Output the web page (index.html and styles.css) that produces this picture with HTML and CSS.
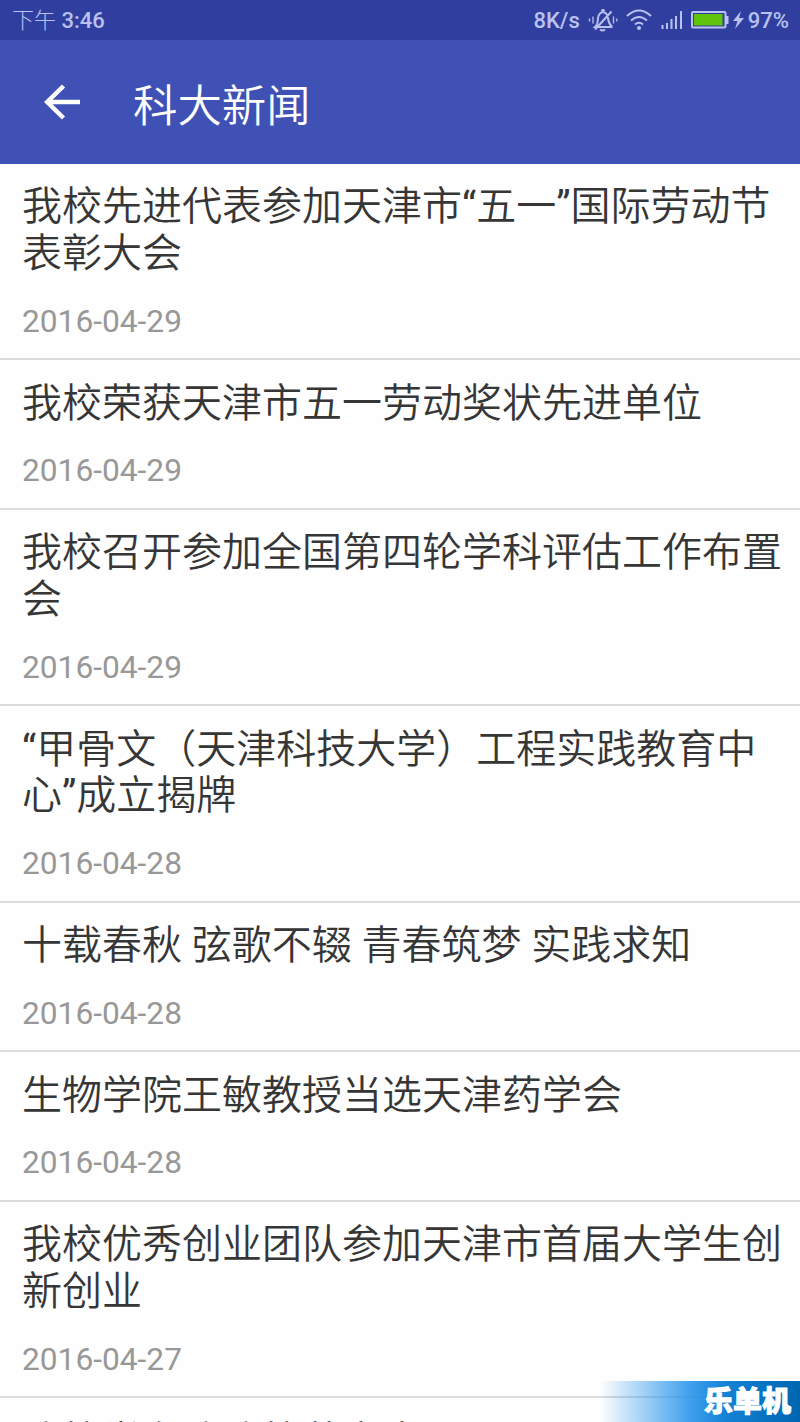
FILE: index.html
```
<!DOCTYPE html>
<html lang="zh-CN">
<head>
    <meta charset="UTF-8">
    <meta name="viewport" content="width=device-width, initial-scale=1.0">
    <title>科大新闻</title>
    <link rel="stylesheet" href="styles.css">
</head>
<body>
    <!-- 状态栏 -->
    <div class="status-bar">
        <div class="time">下午 <b>3:46</b></div>
        <div class="status-icons">
            <span class="speed">8K/s</span>
            <svg class="bell" width="30" height="26" viewBox="0 0 30 26">
                <path d="M8 19c2-2 1.500-4 2-8 .5-3.500 2-5.500 5-6 3 .5 4.500 2.500 5 6 .500 4 1 6 3.500 8v1H7zM13.500 4q1.500-2 3 0M12 22.500q2.500 2 5 0M7 22.500L23.500 4.500"/>
                <path class="waves" d="M5 9.500v7M1.500 11.500v3M25.500 9.500v7M28.800 11.500v3"/>
            </svg>
            <svg class="wifi" width="26" height="22" viewBox="0 0 26 22">
                <path d="M1 7Q13-4 25 7M5 11.500q8-7 16 0M9 15.500q4-3.500 8 0"/>
                <circle cx="13" cy="19" r="2"/>
            </svg>
            <svg class="signal" width="22" height="18" viewBox="0 0 22 18">
                <path d="M1.500 18v-4M6 18v-6M10.500 18V8M15 18V5M20 18V0"/>
            </svg>
            <svg class="battery" width="38" height="18" viewBox="0 0 38 18">
                <rect class="case" x="1" y="1" width="33.500" height="15.500" rx="1"/>
                <rect class="level" x="3" y="3" width="28.500" height="11.500"/>
                <path class="cap" d="M35 5h2.500v8H35z"/>
            </svg>
            <svg class="bolt" width="11" height="18" viewBox="0 0 11 18">
                <path d="M8 0L0 10h4.500L2 18l9-11H6z"/>
            </svg>
            <span class="percent">97%</span>
        </div>
    </div>

    <!-- 标题栏 -->
    <div class="toolbar">
        <svg class="back" width="36" height="36" viewBox="0 0 36 36">
            <path d="M36 18H3M19.500 2L3.200 18l16.300 16"/>
        </svg>
        <h1>科大新闻</h1>
    </div>

    <!-- 新闻列表 -->
    <ul class="news-list">
        <li>
            <p class="title">我校先进代表参加天津市<span class="quote">“</span>五一<span class="quote">”</span>国际劳动节<br>表彰大会</p>
            <p class="date">2016-04-29</p>
        </li>
        <li>
            <p class="title">我校荣获天津市五一劳动奖状先进单位</p>
            <p class="date">2016-04-29</p>
        </li>
        <li>
            <p class="title">我校召开参加全国第四轮学科评估工作布置<br>会</p>
            <p class="date">2016-04-29</p>
        </li>
        <li>
            <p class="title"><span class="quote">“</span>甲骨文（天津科技大学）工程实践教育中<br>心<span class="quote">”</span>成立揭牌</p>
            <p class="date">2016-04-28</p>
        </li>
        <li>
            <p class="title">十载春秋 弦歌不辍 青春筑梦 实践求知</p>
            <p class="date">2016-04-28</p>
        </li>
        <li>
            <p class="title">生物学院王敏教授当选天津药学会</p>
            <p class="date">2016-04-28</p>
        </li>
        <li>
            <p class="title">我校优秀创业团队参加天津市首届大学生创<br>新创业</p>
            <p class="date">2016-04-27</p>
        </li>
        <li>
            <p class="title">我校学在津津校荷文大</p>
        </li>
    </ul>

    <!-- 右下角角标 -->
    <div class="badge">乐单机</div>
</body>
</html>
```

FILE: styles.css
```
* {
    box-sizing: border-box;
    margin: 0;
    padding: 0;
}

body {
    height: 1422px;
    overflow: hidden;
    background-color: #fefefe;
    font-family: Roboto, "Noto Sans CJK SC", sans-serif;
}

/* 状态栏 */
.status-bar {
    display: flex;
    justify-content: space-between;
    height: 40px;
    padding: 0 11px 0 12px;
    background-color: #303f9f;
    color: #b9c1ee;
    font-size: 22px;
    line-height: 42px;
}

.time {
    font-weight: 300;
}

.time b,
.speed,
.percent {
    font-weight: 500;
}

.speed,
.percent {
    padding-top: 2px;
}

.status-icons {
    display: flex;
    align-items: center;
}

.status-icons svg {
    fill: none;
    stroke: #b9c1ee;
    stroke-width: 2;
}

.bell {
    margin-left: 8px;
}

.status-icons .waves {
    stroke-width: 1.3;
}

.wifi {
    margin-left: 8px;
}

.status-icons .wifi circle,
.status-icons .cap,
.status-icons .bolt {
    fill: #b9c1ee;
    stroke: none;
}

.signal {
    margin-left: 9px;
}

.battery {
    margin-left: 8px;
}

.status-icons .level {
    fill: #5fc30c;
    stroke: none;
}

.bolt {
    margin: 0 4px;
}

/* 标题栏 */
.toolbar {
    display: flex;
    align-items: center;
    height: 124px;
    padding-left: 44px;
    background-color: #3f51b5;
    color: #fff;
}

.back {
    fill: none;
    stroke: #fff;
    stroke-width: 4.5;
}

.toolbar h1 {
    margin-left: 53px;
    padding-top: 1px;
    font-size: 44.4px;
    font-weight: 350;
}

/* 新闻列表 */
.news-list {
    margin-top: 0.1px;
    list-style: none;
}

.news-list li {
    padding: 20.2px 22px 17.8px;
    border-bottom: 2px solid #dcdcdc;
}

.title {
    color: #363636;
    font-size: 40px;
    font-weight: 350;
    line-height: 46.8px;
    white-space: nowrap;
}

/* 引号比汉字略粗 */
.quote {
    font-weight: 400;
}

.date {
    margin-top: 24.8px;
    color: #989898;
    font-size: 31.7px;
    line-height: 38px;
}

/* 角标 */
.badge {
    position: absolute;
    right: 0;
    bottom: 0;
    width: 200px;
    height: 41px;
    padding-right: 9px;
    background: linear-gradient(to right, rgba(43, 150, 240, 0), rgba(43, 150, 235, 0.9) 45%, #1583d6 62%, #0a74c4 80%, #0066b0);
    color: #fff;
    font-size: 29px;
    font-weight: 900;
    line-height: 43px;
    text-align: right;
    -webkit-text-stroke: 1px #fff;
}
```
